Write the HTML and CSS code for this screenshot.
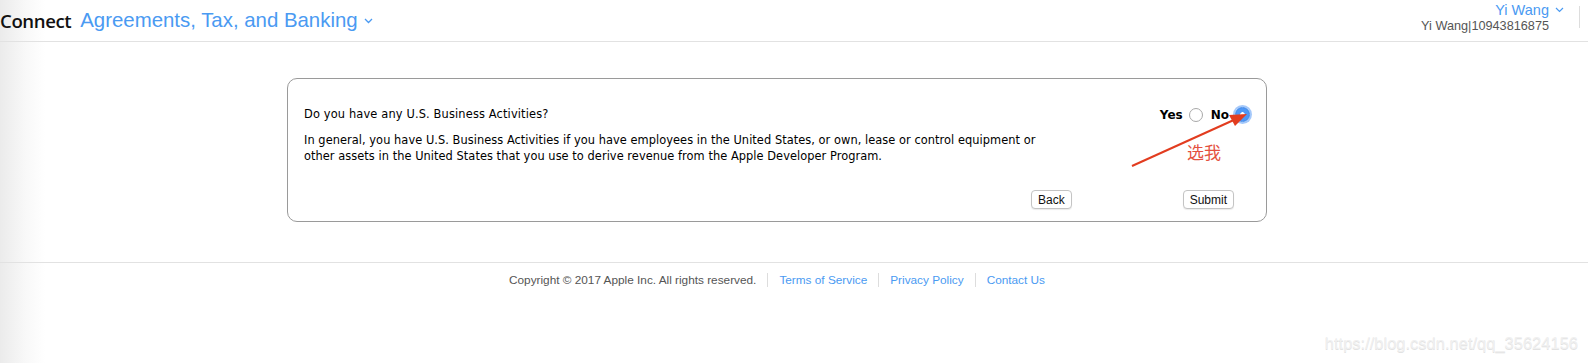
FILE: index.html
```html
<!DOCTYPE html>
<html lang="en">
<head>
  <meta charset="UTF-8">
  <title>Agreements, Tax, and Banking</title>
  <link rel="stylesheet" href="styles.css">
</head>
<body>
  <header class="topbar">
    <div class="brand">
      <span class="app-name">Connect</span>
      <span class="section-name">Agreements, Tax, and Banking</span>
      <svg class="chevron" width="9" height="6" viewBox="0 0 9 6"><path d="M1 1l3.5 3.5L8 1" fill="none" stroke="#4a9af2" stroke-width="1.3"/></svg>
    </div>
    <div class="account">
      <div class="user">
        <div class="user-name">Yi Wang
          <svg class="chevron-sm" width="9" height="6" viewBox="0 0 9 6"><path d="M1 1l3.5 3.5L8 1" fill="none" stroke="#4a9af2" stroke-width="1.2"/></svg>
        </div>
        <div class="user-id">Yi Wang|10943816875</div>
      </div>
      <div class="divider"></div>
    </div>
  </header>

  <main class="content">
    <div class="question-box">
      <div class="question-row">
        <div class="question-text">
          <p class="question">Do you have any U.S. Business Activities?</p>
          <p class="explain">In general, you have U.S. Business Activities if you have employees in the United States, or own, lease or control equipment or other assets in the United States that you use to derive revenue from the Apple Developer Program.</p>
        </div>
        <div class="choices">
          <label class="choice">Yes <span class="radio"></span></label>
          <label class="choice">No <span class="radio checked"></span></label>
        </div>
      </div>
      <div class="actions">
        <button class="btn">Back</button>
        <button class="btn">Submit</button>
      </div>

      <svg class="annotation-arrow" width="130" height="70" viewBox="0 0 130 70">
        <line x1="4" y1="64" x2="108" y2="17" stroke="#e23c1f" stroke-width="2"/>
        <path d="M119 12L101 13L107 24Z" fill="#e23c1f"/>
      </svg>
      <span class="annotation-text">选我</span>
    </div>
  </main>

  <footer class="site-footer">
    <div class="footer-inner">
      <span class="copyright">Copyright © 2017 Apple Inc. All rights reserved.</span>
      <a href="#">Terms of Service</a>
      <a href="#">Privacy Policy</a>
      <a href="#">Contact Us</a>
    </div>
  </footer>

  <span class="watermark">https://blog.csdn.net/qq_35624156</span>
</body>
</html>
```

FILE: styles.css
```css
body {
  margin: 0;
  height: 363px;
  font-family: 'Liberation Sans', Arial, sans-serif;
  color: #333;
  background: linear-gradient(to right, #ebebeb 0, #f8f8f8 25px, #fff 45px);
  position: relative;
  overflow: hidden;
}
.topbar {
  display: flex;
  justify-content: space-between;
  height: 41px;
  border-bottom: 1px solid #e2e2e2;
}
.brand {
  display: flex;
  align-items: center;
  gap: 9px;
  padding-bottom: 1px;
}
.app-name {
  font-family: 'Open Sans', sans-serif;
  font-weight: 600;
  font-size: 18.6px;
  color: #111;
  letter-spacing: -0.4px;
}
.section-name {
  font-size: 20.4px;
  color: #4a9af2;
  margin-left: 0;
}
.chevron {
  margin-left: -3px;
  margin-top: 2px;
}
.account {
  display: flex;
  align-items: flex-start;
  gap: 15px;
  padding-right: 8px;
}
.user {
  text-align: right;
  padding-top: 2px;
}
.user-name {
  font-size: 14.5px;
  color: #4a9af2;
  line-height: 17px;
}
.chevron-sm {
  margin-left: 2px;
  vertical-align: 2px;
}
.user-id {
  font-size: 12.7px;
  color: #555;
  line-height: 15px;
  padding-right: 15px;
}
.divider {
  width: 1px;
  height: 22px;
  margin-top: 6px;
  background: #ddd;
}
.content {
  padding: 36px 34px 0 0;
}
.question-box {
  position: relative;
  width: 978px;
  height: 142px;
  margin: 0 auto;
  border: 1px solid #9a9a9a;
  border-radius: 10px;
  font-family: 'DejaVu Sans', Verdana, sans-serif;
  font-size: 11.4px;
  color: #000;
}
.question-row {
  display: flex;
  align-items: flex-start;
  justify-content: space-between;
  padding: 27px 16px 0 16px;
}
.question-text p {
  margin: 0;
  line-height: 16px;
}
.question {
  margin-bottom: 10px !important;
  letter-spacing: 0.15px;
}
.explain {
  width: 750px;
  letter-spacing: 0.05px;
}
.choices {
  display: flex;
  gap: 8px;
  margin-top: 1px;
}
.choice {
  display: flex;
  align-items: center;
  gap: 6px;
  font-weight: bold;
  font-size: 12px;
}
.radio {
  width: 12px;
  height: 12px;
  border: 1px solid #a8a8a8;
  border-radius: 50%;
  background: #fff;
}
.radio.checked {
  width: 13px;
  height: 13px;
  border: 1px solid #3c86e8;
  background: radial-gradient(circle, #fff 0 2px, #4f97f5 2.5px);
  box-shadow: 0 0 0 2px rgba(90, 155, 245, 0.55);
}
.actions {
  display: flex;
  justify-content: flex-end;
  gap: 111px;
  padding: 26px 32px 0 0;
}
.btn {
  font-family: 'Liberation Sans', Arial, sans-serif;
  font-size: 12px;
  color: #111;
  background: #fff;
  border: 1px solid #c4c4c4;
  border-radius: 4px;
  height: 19px;
  padding: 0 6px;
  box-shadow: 0 1px 1px rgba(0, 0, 0, 0.08);
}
.annotation-arrow {
  position: absolute;
  left: 840px;
  top: 23px;
}
.annotation-text {
  position: absolute;
  left: 899px;
  top: 60px;
  font-family: 'Noto Sans CJK SC', sans-serif;
  font-size: 17px;
  color: #e4513f;
}
.site-footer {
  margin-top: 40px;
  border-top: 1px solid #e2e2e2;
}
.footer-inner {
  display: flex;
  justify-content: center;
  align-items: center;
  padding: 10px 34px 0 0;
  font-size: 11.8px;
}
.copyright {
  color: #555;
}
.footer-inner a {
  color: #4a9af2;
  text-decoration: none;
  border-left: 1px solid #ddd;
  margin-left: 11px;
  padding-left: 11px;
  line-height: 14px;
}
.watermark {
  position: absolute;
  right: 10px;
  bottom: 10px;
  font-size: 16.5px;
  color: #f0f0f0;
  text-shadow: 0 1px 0 #e2e2e2;
}
```
